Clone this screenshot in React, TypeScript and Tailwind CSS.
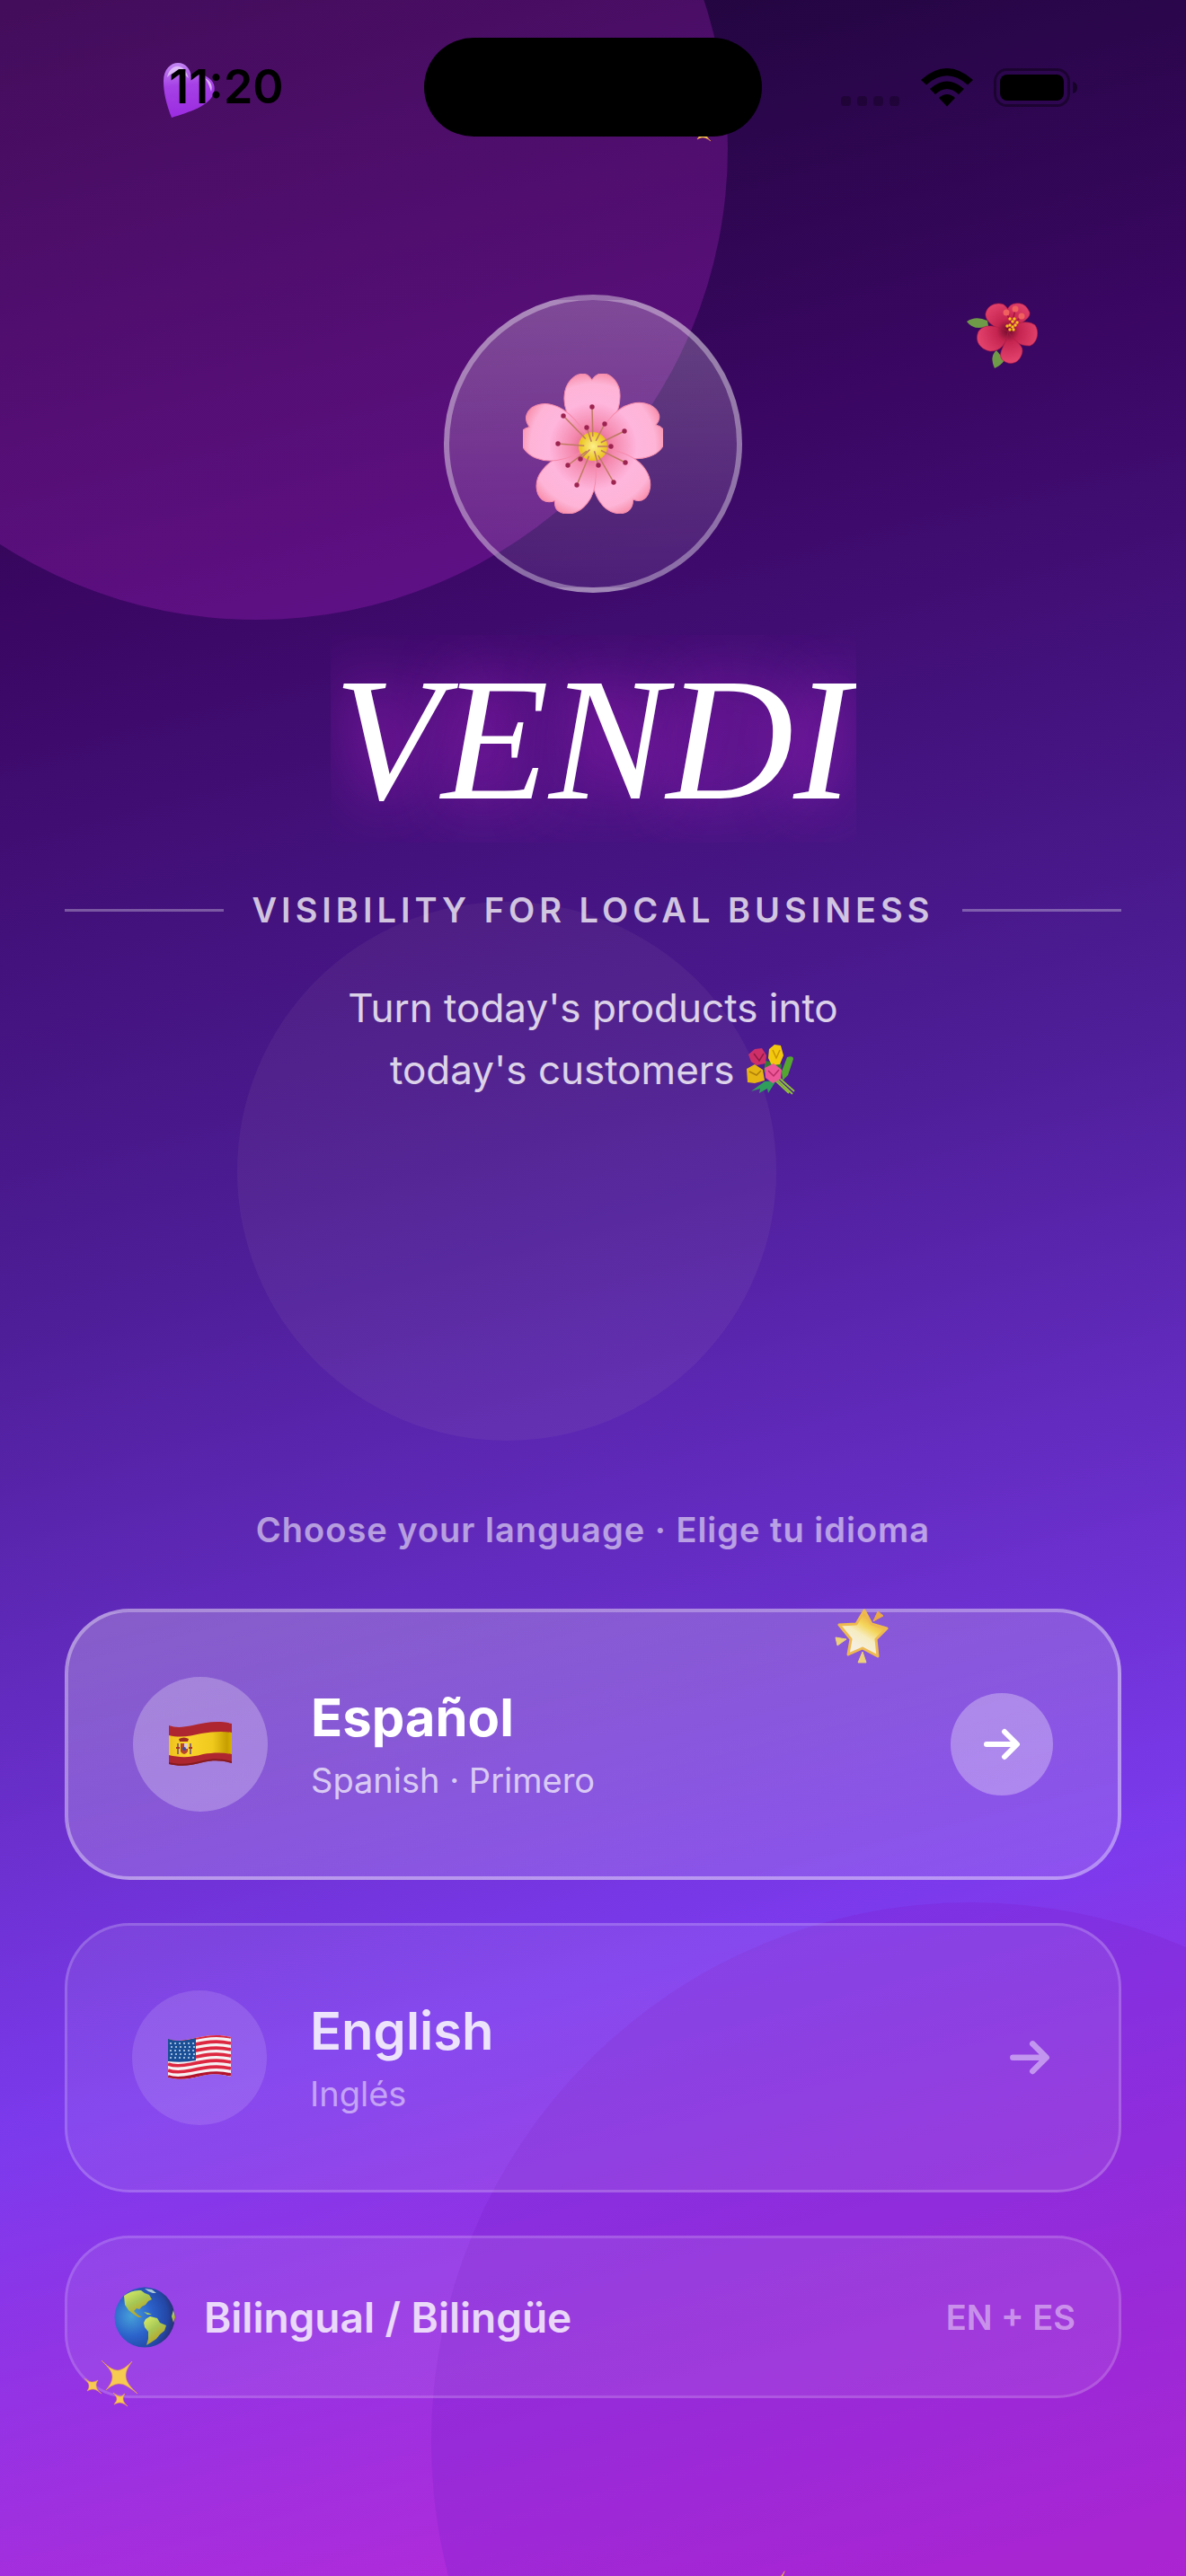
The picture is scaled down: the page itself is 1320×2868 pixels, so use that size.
import React from "react";

const stamens = [
  [-1, -44], [-33, -34], [13, -25], [-7, -21], [35, -17], [-39, -3], [20, 0],
  [36, 18], [-28, 21], [-14, 14], [6, 21], [23, 40], [-18, 43],
];

const petals = [-1, 71, 143, 215, 287];

interface IconProps {
  className?: string;
}

const Blossom: React.FC<IconProps> = ({ className }) => (
  <svg viewBox="0 0 156 156" className={className} aria-hidden="true">
    <defs>
      <radialGradient id="petal" gradientUnits="userSpaceOnUse" cx="0" cy="0" r="82">
        <stop offset="0" stopColor="#d9547f" />
        <stop offset="0.3" stopColor="#f58bb0" />
        <stop offset="0.6" stopColor="#ffb6dd" />
        <stop offset="0.85" stopColor="#fdb4d6" />
        <stop offset="1" stopColor="#f98fac" />
      </radialGradient>
      <radialGradient id="pollen">
        <stop offset="0" stopColor="#fdf08a" />
        <stop offset="1" stopColor="#eac21c" />
      </radialGradient>
    </defs>
    <g transform="translate(78 81)">
      {petals.map((deg) => (
        <path
          key={deg}
          transform={`rotate(${deg})`}
          d="M0 0C-14-14-33-34-31-56C-30-73-18-81-10-81Q-4-81 0-74Q5-81 12-81C21-81 32-70 31-55C31-34 14-14 0 0Z"
          fill="url(#petal)"
          stroke="#f58bab"
          strokeWidth="1"
        />
      ))}
      <circle r="16" fill="url(#pollen)" />
      {stamens.map(([x, y]) => (
        <g key={`${x},${y}`}>
          <path d={`M${x * 0.25} ${y * 0.25}L${x} ${y}`} stroke="#c07a62" strokeWidth="1.5" />
          <circle cx={x} cy={y} r="2.7" fill="#9c2450" />
        </g>
      ))}
    </g>
  </svg>
);

const Hibiscus: React.FC<IconProps> = ({ className }) => (
  <svg viewBox="0 0 79 73" className={className} aria-hidden="true">
    <defs>
      <radialGradient id="hib" gradientUnits="userSpaceOnUse" cx="46" cy="31" r="36">
        <stop offset="0" stopColor="#6d0a2a" />
        <stop offset="0.35" stopColor="#c4244f" />
        <stop offset="1" stopColor="#e5446f" />
      </radialGradient>
    </defs>
    <path d="M0 21Q10 14 23 20L24 26Q8 32 0 21Z" fill="#6f9a48" />
    <path d="M31 73Q25 60 33 53L42 64Q38 70 31 73Z" fill="#6f9a48" />
    <g fill="url(#hib)" stroke="#b01d45" strokeWidth="0.6">
      <path d="M46 30C60 24 74 16 69 9C66 2 60 0 54 1C44 2 41 14 46 30Z" />
      <path d="M46 32C34 30 20 22 21 12C23 2 34-1 41 2C50 8 48 20 46 32Z" />
      <path d="M46 30C56 20 70 20 76 25C82 34 77 46 70 48C58 48 50 42 46 30Z" />
      <path d="M46 32C50 42 66 46 61 58C57 69 46 70 39 63C34 56 44 46 46 32Z" />
      <path d="M46 32C34 26 20 22 13 32C8 44 16 52 26 54C38 54 44 46 46 32Z" />
    </g>
    <path d="M49 22L44 11M51 20L54 8M54 22L60 16" stroke="#a3123a" strokeWidth="1.4" />
    <g fill="#f0605f">
      <circle cx="44" cy="11" r="3.5" />
      <circle cx="54" cy="7" r="3.5" />
      <circle cx="61" cy="15" r="3.5" />
    </g>
    <g fill="#f7c11d">
      {[[48, 18], [53, 18], [51, 21], [56, 22], [48, 25], [54, 25], [51, 27], [45, 26], [48, 30], [52, 30]].map(([x, y]) => (
        <circle key={`${x}-${y}`} cx={x} cy={y} r="1.7" />
      ))}
    </g>
  </svg>
);

const Heart: React.FC<IconProps> = ({ className }) => (
  <svg viewBox="0 0 58 61" className={className} aria-hidden="true">
    <defs>
      <linearGradient id="heart" x1="0.4" y1="0" x2="0.5" y2="1">
        <stop offset="0" stopColor="#c284f2" />
        <stop offset="0.4" stopColor="#a641e6" />
        <stop offset="1" stopColor="#9a2be0" />
      </linearGradient>
    </defs>
    <path d="M9 61C3 46 0 33 0 20C0 7 8 0 16 0C25 0 30 7 31 16C37 12 44 12 49 16C56 20 58 27 56 33C52 48 28 55 9 61Z" fill="url(#heart)" />
    <path d="M4 16C6 7 12 3 17 4C23 5 26 11 28 17C20 9 12 8 4 16Z" fill="#e7cff8" opacity="0.75" />
    <path d="M46 17C53 20 55 26 53 32C51 25 49 21 46 17Z" fill="#e7cff8" opacity="0.8" />
  </svg>
);

const GlowStar: React.FC<IconProps> = ({ className }) => (
  <svg viewBox="0 0 61 61" className={className} aria-hidden="true">
    <defs>
      <linearGradient id="star" x1="0.8" y1="0.1" x2="0.35" y2="0.8">
        <stop offset="0" stopColor="#e89b35" />
        <stop offset="0.4" stopColor="#f4d65c" />
        <stop offset="0.65" stopColor="#f6ecc0" />
        <stop offset="1" stopColor="#f5efe2" />
      </linearGradient>
    </defs>
    <path d="M33 2L41 17L58 22L46 34L48 53L31 44L15 51L18 34L5 18L24 17Z" fill="url(#star)" stroke="#eeb94f" strokeWidth="3" strokeLinejoin="round" />
    <g strokeLinejoin="round" strokeWidth="1">
      <path d="M1 32L13 34L3 41Z" fill="#ecd07a" stroke="#ecd07a" />
      <path d="M31 48L26 60L35 60Z" fill="#ecd07a" stroke="#ecd07a" />
      <path d="M48 3L54 8L43 14Z" fill="#eba845" stroke="#eba845" />
    </g>
  </svg>
);

const Sparkles: React.FC<IconProps> = ({ className }) => (
  <svg viewBox="0 0 59 52" className={className} aria-hidden="true">
    <g fill="#f7cb50" stroke="#eda048" strokeWidth="0.6">
      <path d="M19 0C29 10 34 11 38 11C43 10 47 7 53 1C48 8 46 12 46 17C46 23 50 29 59 37C49 29 44 26 39 26C34 26 30 28 24 33C29 27 31 23 31 18C31 13 28 9 19 0Z" />
      <path d="M0 20C5 24 7 24 9 24C11 24 13 23 15 22C13 25 13 26 13 28C13 31 15 34 19 37C14 33 12 32 9 32C7 32 5 33 3 34C5 31 5 30 5 28C5 26 4 24 0 20Z" />
      <path d="M32 36C36 39 38 40 40 40C42 40 43 38 45 37C43 40 43 41 43 43C43 46 45 48 48 51C44 48 42 47 39 47C37 47 35 48 33 49C35 46 36 45 36 43C36 41 35 39 32 36Z" />
    </g>
  </svg>
);

const Globe: React.FC<IconProps> = ({ className }) => (
  <svg viewBox="0 0 68 68" className={className} aria-hidden="true">
    <defs>
      <radialGradient id="ocean" cx="0.28" cy="0.48" r="0.75">
        <stop offset="0" stopColor="#46a0d8" />
        <stop offset="0.45" stopColor="#2b62cb" />
        <stop offset="0.8" stopColor="#2347a6" />
        <stop offset="1" stopColor="#292a63" />
      </radialGradient>
      <linearGradient id="land" x1="0" y1="0" x2="0.6" y2="1">
        <stop offset="0" stopColor="#dcf06a" />
        <stop offset="0.5" stopColor="#a6c755" />
        <stop offset="1" stopColor="#c29b16" />
      </linearGradient>
    </defs>
    <circle cx="34" cy="34" r="33.5" fill="url(#ocean)" />
    <g fill="url(#land)">
      <path d="M11 10Q20 3 30 4L34 7L39 9L42 14L38 16L35 20L31 22L28 25L25 24L22 27L26 31L31 34L27 34L21 30L16 26L12 20Z" />
      <path d="M35 36L40 33L48 35L51 40L58 43L56 49L51 53L47 58L41 62L36 65L38 58L38 50L34 45L33 40Z" />
      <path d="M66 26L68 34L66 40L64 33Z" />
    </g>
    <path d="M34 2L42 3L47 7L43 7L38 5Z" fill="#a9c7d8" />
    <path d="M33 28L38 29L42 31L37 31Z" fill="#9ec95b" />
  </svg>
);

const Bouquet: React.FC<IconProps> = ({ className }) => (
  <svg viewBox="0 0 56 56" className={className} aria-hidden="true">
    <path d="M46 14Q53 12 53 16L47 34L41 40L40 30Z" fill="#55a630" />
    <path d="M33 37L52 55M36 36L54 52M33 40L48 54" stroke="#8fbf3a" strokeWidth="1.8" />
    <path d="M34 40L21 41L6 52L16 49L15 54L24 49L25 54Z" fill="#2f9e5c" />
    <path d="M22 18L40 22L38 40L20 30Z" fill="#2f7d33" />
    <path d="M3 11L10 5L18 4L23 12L22 21L12 23L6 19Z" fill="#cf2f68" />
    <path d="M9 10L15 18L20 10" stroke="#8e1a45" strokeWidth="1.5" fill="none" />
    <path d="M26 5L32 0L39 1L42 12L38 22L29 23L25 15Z" fill="#f3c90d" />
    <path d="M30 6L34 15L38 6" stroke="#c99406" strokeWidth="1.5" fill="none" />
    <path d="M1 27L10 22L19 28L21 40L10 43L2 42Z" fill="#e5b514" />
    <path d="M4 30L12 34L17 29" stroke="#af7f0b" strokeWidth="1.5" fill="none" />
    <path d="M21 26L31 21L40 28L39 38L30 43L22 37Z" fill="#ec5798" />
    <path d="M25 29L31 35L37 28" stroke="#b82c65" strokeWidth="1.5" fill="none" />
  </svg>
);

const wave = "M0 4C8 7 16 6 26 4C40 1 54-2 70 2V46C60 43 50 42 38 45C24 49 12 50 0 47Z";

const SpainFlag: React.FC<IconProps> = ({ className }) => (
  <svg viewBox="0 0 70 50" className={className} aria-hidden="true">
    <defs>
      <clipPath id="es-wave">
        <path d={wave} />
      </clipPath>
      <linearGradient id="es-gold">
        <stop offset="0" stopColor="#eec21c" />
        <stop offset="0.3" stopColor="#fbd42c" />
        <stop offset="0.7" stopColor="#efc91c" />
        <stop offset="0.92" stopColor="#c79f00" />
        <stop offset="1" stopColor="#d9b100" />
      </linearGradient>
    </defs>
    <g clipPath="url(#es-wave)">
      <rect width="70" height="50" fill="#ae2730" />
      <path d="M0 15C12 18 24 16 36 13C48 11 60 10 70 12V36C60 34 50 34 38 36C24 40 12 40 0 37Z" fill="url(#es-gold)" />
      <path d="M0 45C12 48 24 47 38 43C50 40 60 41 70 44V50H0Z" fill="#861a1f" />
    </g>
    <path d="M13 24H21V33Q17 39 13 33Z" fill="#b6452f" />
    <path d="M17 24H21V30H17Z" fill="#dcc9d6" />
    <path d="M12 22L11 19Q17 16 22 19L21 22Z" fill="#9c2c24" />
    <path d="M10 24V36M24 24V36" stroke="#8c6a6a" strokeWidth="2" />
    <path d="M8 29H12M22 29H26" stroke="#a8322c" strokeWidth="2" />
    <circle cx="17" cy="30" r="2" fill="#3d4f96" />
  </svg>
);

const UsaFlag: React.FC<IconProps> = ({ className }) => (
  <svg viewBox="0 0 70 50" className={className} aria-hidden="true">
    <defs>
      <clipPath id="us-wave">
        <path d={wave} />
      </clipPath>
    </defs>
    <g clipPath="url(#us-wave)">
      <rect width="70" height="50" fill="#f6f1f3" />
      {[0, 1, 2, 3, 4, 5, 6].map((n) => (
        <path
          key={n}
          transform={`translate(0 ${n * 7})`}
          d="M0 4C8 7 16 6 26 4C40 1 54-2 70 2"
          fill="none"
          stroke={n === 6 ? "#b3122b" : "#dd2740"}
          strokeWidth="3.6"
        />
      ))}
      <path d="M0 3C10 7 20 6 31 3V28Q16 31 0 29Z" fill="#1a4f96" />
      {[9, 13, 17, 21, 25].map((y, row) =>
        [3, 8, 13, 18, 23, 28].map((x) => (
          <circle key={`${x}-${y}`} cx={x + (row % 2)} cy={y} r="1" fill="#c9dcf2" />
        ))
      )}
    </g>
  </svg>
);

const Arrow: React.FC<IconProps> = ({ className }) => (
  <svg
    viewBox="0 0 42 36"
    className={className}
    fill="none"
    stroke="currentColor"
    strokeWidth="6"
    strokeLinecap="round"
    strokeLinejoin="round"
    aria-hidden="true"
  >
    <path d="M4 18H37M24 4L38 18L24 32" />
  </svg>
);

const StatusBar: React.FC = () => (
  <header className="relative z-20 grid grid-cols-[1fr_376px_1fr] items-center pt-[42px]">
    <p className="pl-8 text-center text-[52px] leading-none font-semibold text-black">11:20</p>
    <div className="h-[110px] rounded-full bg-black" />
    <div className="flex items-center justify-center gap-[23px] pr-8 text-black">
      <svg viewBox="0 0 66 43" className="h-[43px] w-[66px] opacity-25" fill="currentColor" aria-hidden="true">
        {[0, 18, 36, 54].map((x) => (
          <rect key={x} x={x} y="31" width="11" height="11" rx="3.5" />
        ))}
      </svg>
      <svg viewBox="0 0 58 43" className="h-[43px] w-[58px]" fill="currentColor" aria-hidden="true">
        <path d="M0 13Q29-13 58 13L52 18.500Q29-2 6 18.500Z" />
        <path d="M10 23Q29 6 48 23L42 29Q29 17 16 29Z" />
        <path d="M20 33Q29 25 38 33L29 42.500Z" />
      </svg>
      <svg viewBox="0 0 94 43" className="h-[43px] w-[94px]" aria-hidden="true">
        <rect x="1.500" y="1.500" width="82" height="40" rx="13" fill="none" stroke="#000" strokeOpacity="0.38" strokeWidth="3" />
        <rect x="7" y="7" width="71" height="29" rx="8" />
        <path d="M88 15Q93 16 93 21.500T88 28Z" fillOpacity="0.5" />
      </svg>
    </div>
  </header>
);

const App: React.FC = () => {
  return (
    <div className="relative flex min-h-screen flex-col overflow-hidden bg-[linear-gradient(165deg,#1a0533_0%,#3b0764_22%,#4c1d95_45%,#7c3aed_74%,#c026d3_100%)] font-['Inter',sans-serif] text-white">
      {/* Background circles */}
      <div className="absolute -top-[360px] -left-[240px] size-[1050px] rounded-full bg-[#c026d3]/25" />
      <div className="absolute top-[35%] left-[20%] size-[600px] rounded-full bg-amber-100/5" />
      <div className="absolute -right-[360px] -bottom-[450px] size-[1200px] rounded-full bg-[#7e22ce]/30" />

      {/* Floating decorations */}
      <Heart className="absolute top-[70px] left-[182px] w-[58px]" />
      <Hibiscus className="absolute top-[337px] right-[165px] w-[79px]" />
      <GlowStar className="absolute top-[1791px] left-[929px] z-10 w-[61px]" />
      <Sparkles className="absolute top-[2628px] left-[94px] z-10 w-[59px]" />
      <Sparkles className="absolute top-[106px] left-[743px] w-[59px]" />
      <Sparkles className="absolute top-[2866px] left-[826px] w-[59px] -rotate-12" />

      <StatusBar />

      {/* Hero */}
      <main className="relative flex flex-1 flex-col px-[72px] pt-44 pb-[198px]">
        <section className="flex flex-col items-center">
          <div className="flex size-[332px] items-center justify-center rounded-full border-6 border-white/35 bg-linear-to-b from-white/25 to-white/8">
            <Blossom className="w-[156px]" />
          </div>
          <h1 className="mt-[47px] overflow-hidden px-1 font-['Liberation_Serif',serif] text-[196px] leading-[231px] italic [text-shadow:0_0_72px_#c026d3]">
            VENDI
          </h1>
          <div className="mt-[51px] flex w-full items-center gap-[31px]">
            <span className="h-[3px] flex-1 bg-white/30" />
            <p className="text-[38px] leading-[48px] font-semibold tracking-[5px] text-white/75">
              VISIBILITY FOR LOCAL BUSINESS
            </p>
            <span className="h-[3px] flex-1 bg-white/30" />
          </div>
          <p className="mt-[51px] text-center text-[44px] leading-[69px] text-white/80">
            Turn today's products into
            <br />
            today's customers <Bouquet className="inline w-[56px] align-[-12px]" />
          </p>
        </section>

        {/* Language options */}
        <section className="mt-auto flex flex-col gap-12">
          <h2 className="mb-4 text-center text-[38px] leading-[48px] font-semibold tracking-[1px] text-white/55">
            Choose your language · Elige tu idioma
          </h2>

          <button
            type="button"
            className="flex w-full items-center gap-12 rounded-[72px] border-4 border-white/35 bg-linear-to-br from-white/25 to-white/12 p-[72px] text-left"
          >
            <span className="flex size-[150px] items-center justify-center rounded-full bg-white/25">
              <SpainFlag className="w-[70px]" />
            </span>
            <span className="flex-1">
              <span className="block text-[58px] leading-[80px] font-bold">Español</span>
              <span className="block text-[38px] leading-[60px] text-white/70">Spanish · Primero</span>
            </span>
            <span className="flex size-[114px] items-center justify-center rounded-full bg-white/30">
              <Arrow className="w-[42px]" />
            </span>
          </button>

          <button
            type="button"
            className="flex w-full items-center gap-12 rounded-[72px] border-3 border-white/18 bg-white/8 p-[72px] text-left"
          >
            <span className="flex size-[150px] items-center justify-center rounded-full bg-white/12">
              <UsaFlag className="w-[70px]" />
            </span>
            <span className="flex-1">
              <span className="block text-[58px] leading-[80px] font-semibold text-white/85">English</span>
              <span className="block text-[38px] leading-[60px] text-white/50">Inglés</span>
            </span>
            <Arrow className="mr-1 w-[46px] text-white/45" />
          </button>

          <button
            type="button"
            className="flex h-[181px] w-full items-center gap-8 rounded-[72px] border-3 border-white/15 bg-white/8 pr-12 pl-[52px] text-left"
          >
            <Globe className="w-[68px]" />
            <span className="flex-1 text-[46px] leading-[60px] font-semibold text-white/80">Bilingual / Bilingüe</span>
            <span className="text-[38px] leading-[48px] font-semibold text-white/45">EN + ES</span>
          </button>
        </section>
      </main>
    </div>
  );
};

export default App;
